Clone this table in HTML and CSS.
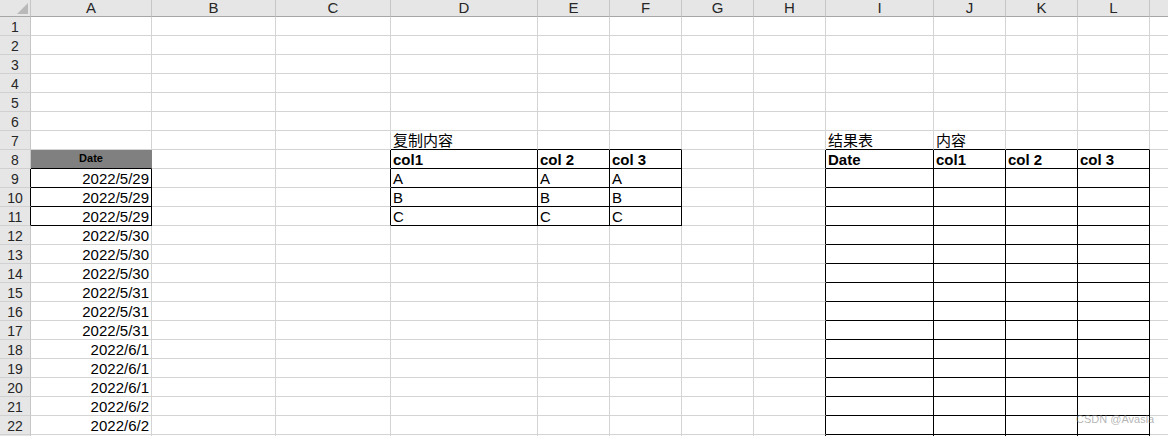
FILE: index.html
```html
<!DOCTYPE html>
<html lang="zh">
<head>
<meta charset="utf-8">
<title>Sheet</title>
<link rel="stylesheet" href="styles.css">
</head>
<body>
<div class="sheet">
  <div class="corner"><svg class="tri" width="11" height="11" viewBox="0 0 11 11"><polygon points="0,11 11,0 11,11" fill="#b9b9b9"/></svg></div>
  <div class="ch">A</div><div class="ch">B</div><div class="ch">C</div><div class="ch">D</div><div class="ch">E</div><div class="ch">F</div><div class="ch">G</div><div class="ch">H</div><div class="ch">I</div><div class="ch">J</div><div class="ch">K</div><div class="ch">L</div><div class="ch"></div>

  <div class="rh">1</div><div></div><div></div><div></div><div></div><div></div><div></div><div></div><div></div><div></div><div></div><div></div><div></div><div></div>
  <div class="rh">2</div><div></div><div></div><div></div><div></div><div></div><div></div><div></div><div></div><div></div><div></div><div></div><div></div><div></div>
  <div class="rh">3</div><div></div><div></div><div></div><div></div><div></div><div></div><div></div><div></div><div></div><div></div><div></div><div></div><div></div>
  <div class="rh">4</div><div></div><div></div><div></div><div></div><div></div><div></div><div></div><div></div><div></div><div></div><div></div><div></div><div></div>
  <div class="rh">5</div><div></div><div></div><div></div><div></div><div></div><div></div><div></div><div></div><div></div><div></div><div></div><div></div><div></div>
  <div class="rh">6</div><div></div><div></div><div></div><div></div><div></div><div></div><div></div><div></div><div></div><div></div><div></div><div></div><div></div>
  <div class="rh">7</div><div></div><div></div><div></div><div class="b">复制内容</div><div class="b"></div><div class="b"></div><div></div><div></div><div class="b">结果表</div><div class="b">内容</div><div class="b"></div><div class="b"></div><div></div>
  <div class="rh">8</div><div class="dh">Date</div><div></div><div class="r"></div><div class="r b bold">col1</div><div class="r b bold">col 2</div><div class="r b bold">col 3</div><div></div><div class="r"></div><div class="r b bold">Date</div><div class="r b bold">col1</div><div class="r b bold">col 2</div><div class="r b bold">col 3</div><div></div>
  <div class="rh rk">9</div><div class="r b num">2022/5/29</div><div></div><div class="r"></div><div class="r b">A</div><div class="r b">A</div><div class="r b">A</div><div></div><div class="r"></div><div class="r b"></div><div class="r b"></div><div class="r b"></div><div class="r b"></div><div></div>
  <div class="rh rk">10</div><div class="r b num">2022/5/29</div><div></div><div class="r"></div><div class="r b">B</div><div class="r b">B</div><div class="r b">B</div><div></div><div class="r"></div><div class="r b"></div><div class="r b"></div><div class="r b"></div><div class="r b"></div><div></div>
  <div class="rh rk">11</div><div class="r b num">2022/5/29</div><div></div><div class="r"></div><div class="r b">C</div><div class="r b">C</div><div class="r b">C</div><div></div><div class="r"></div><div class="r b"></div><div class="r b"></div><div class="r b"></div><div class="r b"></div><div></div>
  <div class="rh">12</div><div class="num">2022/5/30</div><div></div><div></div><div></div><div></div><div></div><div></div><div class="r"></div><div class="r b"></div><div class="r b"></div><div class="r b"></div><div class="r b"></div><div></div>
  <div class="rh">13</div><div class="num">2022/5/30</div><div></div><div></div><div></div><div></div><div></div><div></div><div class="r"></div><div class="r b"></div><div class="r b"></div><div class="r b"></div><div class="r b"></div><div></div>
  <div class="rh">14</div><div class="num">2022/5/30</div><div></div><div></div><div></div><div></div><div></div><div></div><div class="r"></div><div class="r b"></div><div class="r b"></div><div class="r b"></div><div class="r b"></div><div></div>
  <div class="rh">15</div><div class="num">2022/5/31</div><div></div><div></div><div></div><div></div><div></div><div></div><div class="r"></div><div class="r b"></div><div class="r b"></div><div class="r b"></div><div class="r b"></div><div></div>
  <div class="rh">16</div><div class="num">2022/5/31</div><div></div><div></div><div></div><div></div><div></div><div></div><div class="r"></div><div class="r b"></div><div class="r b"></div><div class="r b"></div><div class="r b"></div><div></div>
  <div class="rh">17</div><div class="num">2022/5/31</div><div></div><div></div><div></div><div></div><div></div><div></div><div class="r"></div><div class="r b"></div><div class="r b"></div><div class="r b"></div><div class="r b"></div><div></div>
  <div class="rh">18</div><div class="num">2022/6/1</div><div></div><div></div><div></div><div></div><div></div><div></div><div class="r"></div><div class="r b"></div><div class="r b"></div><div class="r b"></div><div class="r b"></div><div></div>
  <div class="rh">19</div><div class="num">2022/6/1</div><div></div><div></div><div></div><div></div><div></div><div></div><div class="r"></div><div class="r b"></div><div class="r b"></div><div class="r b"></div><div class="r b"></div><div></div>
  <div class="rh">20</div><div class="num">2022/6/1</div><div></div><div></div><div></div><div></div><div></div><div></div><div class="r"></div><div class="r b"></div><div class="r b"></div><div class="r b"></div><div class="r b"></div><div></div>
  <div class="rh">21</div><div class="num">2022/6/2</div><div></div><div></div><div></div><div></div><div></div><div></div><div class="r"></div><div class="r b"></div><div class="r b"></div><div class="r b"></div><div class="r b"></div><div></div>
  <div class="rh">22</div><div class="num">2022/6/2</div><div></div><div></div><div></div><div></div><div></div><div></div><div class="r"></div><div class="r b"></div><div class="r b"></div><div class="r b"></div><div class="r b"></div><div></div>
  <div class="rh"></div><div></div><div></div><div></div><div></div><div></div><div></div><div></div><div class="r"></div><div class="r b"></div><div class="r b"></div><div class="r b"></div><div class="r b"></div><div></div>
</div>
<div class="watermark">CSDN @Avasla</div>
</body>
</html>
```

FILE: styles.css
```css
html, body {
  margin: 0;
  padding: 0;
  background: #fff;
  overflow: hidden;
  width: 1168px;
  height: 436px;
}

body {
  position: relative;
  font-family: "Liberation Sans", "Noto Sans CJK SC", sans-serif;
  font-size: 15px;
  color: #000;
}

.sheet {
  display: grid;
  grid-template-columns: 31px 121px 124px 115px 147px 72px 72px 72px 72px 108px 72px 72px 72px 72px;
  grid-template-rows: 17px repeat(23, 19px);
  width: max-content;
}

.sheet > div {
  box-sizing: border-box;
  border-right: 1px solid #d4d4d4;
  border-bottom: 1px solid #d4d4d4;
  white-space: nowrap;
  padding: 1px 2px 0 2px;
  line-height: 18px;
  min-width: 0;
}

.sheet > .corner {
  background: #e6e6e6;
  border-right: 1px solid #c6c6c6;
  border-bottom: 1px solid #a6a6a6;
  padding: 0 2px 2px 0;
  display: flex;
  justify-content: flex-end;
  align-items: flex-end;
}

.tri {
  display: block;
}

.sheet > .ch {
  background: #e6e6e6;
  border-right: 1px solid #c6c6c6;
  border-bottom: 1px solid #a6a6a6;
  text-align: center;
  font-size: 15px;
  line-height: 16px;
  padding: 0;
  color: #262626;
}

.sheet > .rh {
  background: #e6e6e6;
  border-right: 1px solid #c6c6c6;
  border-bottom: 1px solid #d0d0d0;
  text-align: center;
  font-size: 14px;
  padding: 1px 0 0 0;
  color: #262626;
}

.sheet > .rk {
  border-right-color: #000;
}

.sheet > .r {
  border-right-color: #000;
}

.sheet > .b {
  border-bottom-color: #000;
}

.bold {
  font-weight: bold;
}

.num {
  text-align: right;
}

.sheet > .dh {
  background: #808080;
  border-right-color: #808080;
  border-bottom-color: #000;
  font-weight: bold;
  font-size: 11px;
  text-align: center;
  line-height: 17px;
  padding: 0;
}

.watermark {
  position: absolute;
  left: 1076px;
  top: 413px;
  font-size: 11px;
  line-height: 13px;
  color: rgba(130, 130, 130, 0.6);
  white-space: nowrap;
}
```
